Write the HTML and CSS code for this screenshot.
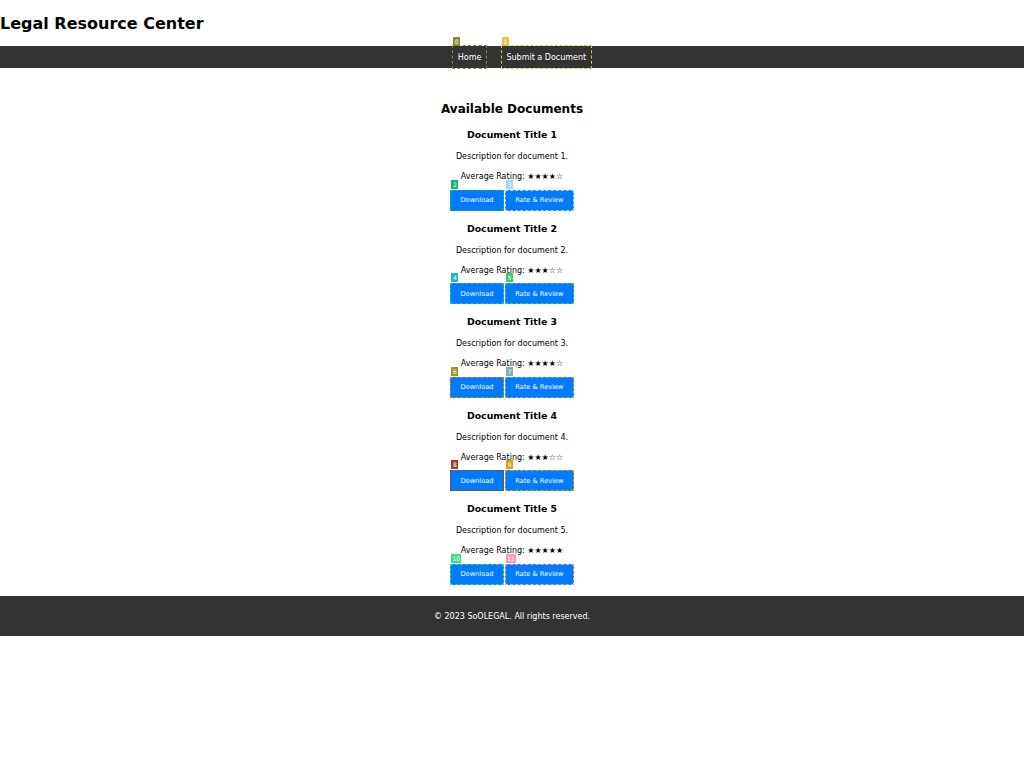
FILE: index.html
```html
<!DOCTYPE html>
<html lang="en">
<head>
<meta charset="utf-8">
<title>Legal Resource Center</title>
<link rel="stylesheet" href="styles.css">
</head>
<body>
<header class="site-header">
  <h1 class="site-title">Legal Resource Center</h1>
  <nav class="main-nav">
    <ul class="nav-list">
      <li class="nav-item"><a class="nav-link mk mk-0" href="#">Home</a><span class="tag tag-0">0</span></li>
      <li class="nav-item"><a class="nav-link mk mk-1" href="#">Submit a Document</a><span class="tag tag-1">1</span></li>
    </ul>
  </nav>
</header>

<main class="docs">
  <h2 class="docs-title">Available Documents</h2>

  <section class="doc">
    <h3 class="doc-title">Document Title 1</h3>
    <p class="doc-desc">Description for document 1.</p>
    <p class="doc-rating">Average Rating: ★★★★☆</p>
    <div class="doc-actions">
      <span class="act"><button class="btn mk mk-2">Download</button><span class="tag tag-2">2</span></span>
      <span class="act"><button class="btn mk mk-3">Rate &amp; Review</button><span class="tag tag-3">3</span></span>
    </div>
  </section>

  <section class="doc">
    <h3 class="doc-title">Document Title 2</h3>
    <p class="doc-desc">Description for document 2.</p>
    <p class="doc-rating">Average Rating: ★★★☆☆</p>
    <div class="doc-actions">
      <span class="act"><button class="btn mk mk-4">Download</button><span class="tag tag-4">4</span></span>
      <span class="act"><button class="btn mk mk-5">Rate &amp; Review</button><span class="tag tag-5">5</span></span>
    </div>
  </section>

  <section class="doc">
    <h3 class="doc-title">Document Title 3</h3>
    <p class="doc-desc">Description for document 3.</p>
    <p class="doc-rating">Average Rating: ★★★★☆</p>
    <div class="doc-actions">
      <span class="act"><button class="btn mk mk-6">Download</button><span class="tag tag-6">6</span></span>
      <span class="act"><button class="btn mk mk-7">Rate &amp; Review</button><span class="tag tag-7">7</span></span>
    </div>
  </section>

  <section class="doc">
    <h3 class="doc-title">Document Title 4</h3>
    <p class="doc-desc">Description for document 4.</p>
    <p class="doc-rating">Average Rating: ★★★☆☆</p>
    <div class="doc-actions">
      <span class="act"><button class="btn mk mk-8">Download</button><span class="tag tag-8">8</span></span>
      <span class="act"><button class="btn mk mk-9">Rate &amp; Review</button><span class="tag tag-9">9</span></span>
    </div>
  </section>

  <section class="doc">
    <h3 class="doc-title">Document Title 5</h3>
    <p class="doc-desc">Description for document 5.</p>
    <p class="doc-rating">Average Rating: ★★★★★</p>
    <div class="doc-actions">
      <span class="act"><button class="btn mk mk-10">Download</button><span class="tag tag-10">10</span></span>
      <span class="act"><button class="btn mk mk-11">Rate &amp; Review</button><span class="tag tag-11">11</span></span>
    </div>
  </section>
</main>

<footer class="site-footer">
  <p class="copy">© 2023 SoOLEGAL. All rights reserved.</p>
</footer>
</body>
</html>
```

FILE: styles.css
```css
html, body {
  margin: 0;
  padding: 0;
  background: #ffffff;
}

body {
  font-family: "DejaVu Sans", Verdana, sans-serif;
  font-size: 8px;
  line-height: 1.5;
  color: #000;
}

/* Header */
.site-title {
  font-size: 16px;
  font-weight: bold;
  line-height: 24px;
  margin: 0;
  padding: 12px 0 10px;
}

.main-nav {
  background: #333333;
  height: 22px;
}

.nav-list {
  list-style: none;
  margin: 0;
  padding: 0 0 0 20px;
  display: flex;
  justify-content: center;
  gap: 14px;
  height: 22px;
}

.nav-item {
  position: relative;
  display: flex;
}

.nav-link {
  display: block;
  color: #ffffff;
  text-decoration: none;
  line-height: 23px;
  margin: -1px 0;
  padding: 1px 5.5px 0;
}

/* Main */
.docs {
  text-align: center;
  padding: 32px 0 0;
}

.docs-title {
  font-size: 12px;
  line-height: 18px;
  margin: 0 0 10px;
}

.doc {
  margin: 0 0 11px;
}

.doc-title {
  font-size: 9.36px;
  line-height: 14px;
  margin: 0 0 9px;
}

.doc-desc {
  margin: 0 0 8px;
}

.doc-rating {
  margin: 0 0 6.5px;
}

.doc-actions {
  display: flex;
  justify-content: center;
  gap: 1.6px;
}

.act {
  position: relative;
  display: flex;
}

.btn {
  font-family: "DejaVu Sans", Verdana, sans-serif;
  font-size: 6.67px;
  line-height: 8px;
  color: #ffffff;
  background: #007bff;
  border: none;
  border-radius: 1px;
  padding: 6.5px 10px;
  margin: 0;
  cursor: pointer;
}

/* Footer */
.site-footer {
  background: #333333;
  color: #ffffff;
  text-align: center;
  padding: 15.5px 0 12.5px;
}

.copy {
  margin: 0;
  line-height: 12.8px;
}

/* Annotation marks (overlay) */
.mk {
  outline: 1.5px dashed var(--mk);
  outline-offset: -1px;
}

.tag {
  position: absolute;
  left: 1px;
  top: -10px;
  height: 9px;
  min-width: 7px;
  padding: 0 1px;
  box-sizing: border-box;
  font-family: "DejaVu Sans", sans-serif;
  font-size: 6px;
  line-height: 9px;
  color: #ffffff;
  text-align: center;
  background: var(--mk);
}

.nav-item .tag {
  top: -9px;
}

.mk-0, .tag-0 { --mk: #8a8a3a; }
.mk-1, .tag-1 { --mk: #e2c24a; }
.mk-2, .tag-2 { --mk: #16b07a; }
.mk-3, .tag-3 { --mk: #a6d2f6; }
.mk-4, .tag-4 { --mk: #1eb6c8; }
.mk-5, .tag-5 { --mk: #48c46c; }
.mk-6, .tag-6 { --mk: #9a9a28; }
.mk-7, .tag-7 { --mk: #7eaeb8; }
.mk-8, .tag-8 { --mk: #a33c2c; }
.mk-9, .tag-9 { --mk: #d2a21a; }
.mk-10, .tag-10 { --mk: #38e08a; }
.mk-11, .tag-11 { --mk: #f49ac0; }
```
